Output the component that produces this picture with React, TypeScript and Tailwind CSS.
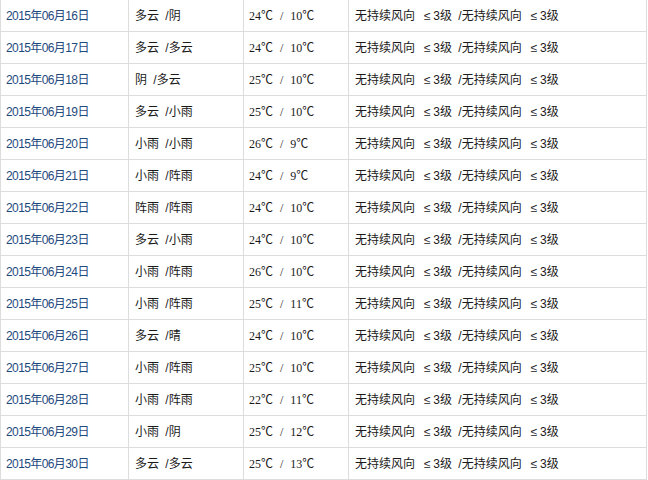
import React from "react";

const rows: [string, string, string, string][] = [
  ["16", "多云 /阴", "24", "10"],
  ["17", "多云 /多云", "24", "10"],
  ["18", "阴 /多云", "25", "10"],
  ["19", "多云 /小雨", "25", "10"],
  ["20", "小雨 /小雨", "26", "9"],
  ["21", "小雨 /阵雨", "24", "9"],
  ["22", "阵雨 /阵雨", "24", "10"],
  ["23", "多云 /小雨", "24", "10"],
  ["24", "小雨 /阵雨", "26", "10"],
  ["25", "小雨 /阵雨", "25", "11"],
  ["26", "多云 /晴", "24", "10"],
  ["27", "小雨 /阵雨", "25", "10"],
  ["28", "小雨 /阵雨", "22", "11"],
  ["29", "小雨 /阴", "25", "12"],
  ["30", "多云 /多云", "25", "13"],
];

function Le() {
  return <span className="inline-block w-[12px] text-center">≤</span>;
}

export default function App() {
  return (
    <div
      className="w-[648px] h-[480px] overflow-hidden bg-white text-[12px] text-[#1a1a1a]"
      style={{ fontFamily: '"Liberation Sans", "Noto Sans CJK SC", sans-serif' }}
    >
      <div className="w-[647px] border-l border-[#dddddd]">
        {rows.map(([d, w, hi, lo]) => (
          <div
            key={d}
            className="grid grid-cols-[128px_115px_105px_298px] h-[32px] border-b border-[#dddddd]"
          >
            <div className="border-r border-[#dddddd] flex items-center pl-[5px] text-[#1e4a7e] tracking-[-0.6px]">
              2015年06月{d}日
            </div>
            <div className="border-r border-[#dddddd] flex items-center pl-[6px] whitespace-pre [word-spacing:3px]">
              {w}
            </div>
            <div
              className="border-r border-[#dddddd] flex items-center pl-[5px] whitespace-pre [word-spacing:4px]"
              style={{ fontFamily: '"Liberation Serif", "Noto Sans CJK SC", serif' }}
            >
              {hi}℃ / {lo}℃
            </div>
            <div className="border-r border-[#dddddd] flex items-center pl-[6px] whitespace-pre [word-spacing:3px]">
              <span>
                无持续风向 <Le />3级 /无持续风向 <Le />3级
              </span>
            </div>
          </div>
        ))}
      </div>
    </div>
  );
}
